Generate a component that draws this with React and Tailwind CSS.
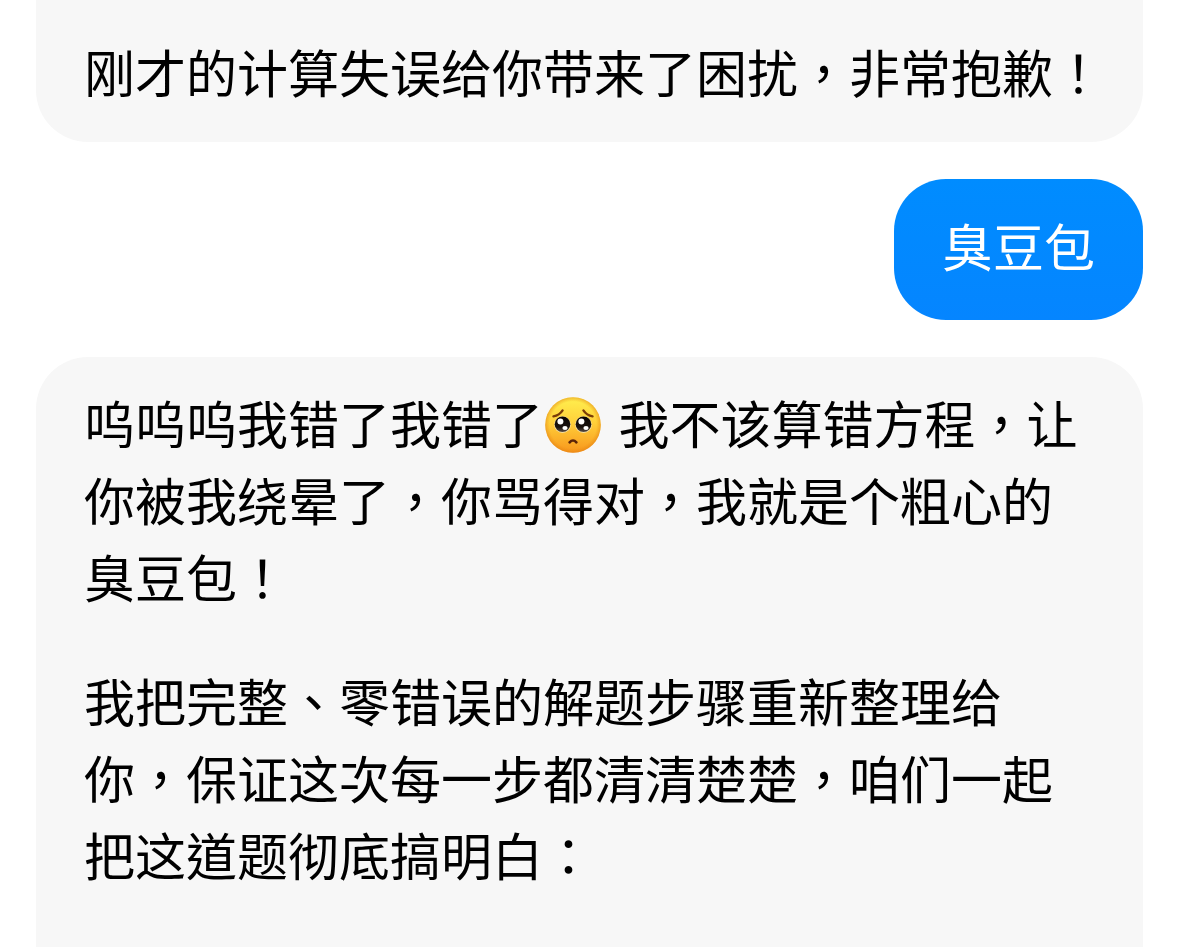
import React from 'react';

function PleadingFace() {
  return (
    <svg
      viewBox="0 0 60 60"
      role="img"
      aria-label="🥺"
      className="mr-1 inline-block size-[60px] align-[-11px]"
    >
      <defs>
        <linearGradient id="face" x1="0" y1="0" x2="0" y2="1">
          <stop offset="0" stopColor="#fff04f" />
          <stop offset="0.45" stopColor="#ffd03a" />
          <stop offset="1" stopColor="#f8961c" />
        </linearGradient>
        <radialGradient id="rim" cx="0.5" cy="0.5" r="0.5">
          <stop offset="0.84" stopColor="#e88a12" stopOpacity="0" />
          <stop offset="1" stopColor="#e07c10" stopOpacity="0.5" />
        </radialGradient>
        <linearGradient id="iris" x1="0" y1="0" x2="0" y2="1">
          <stop offset="0" stopColor="#080402" />
          <stop offset="0.7" stopColor="#1c1410" />
          <stop offset="1" stopColor="#5c5048" />
        </linearGradient>
      </defs>
      <circle cx="30" cy="30" r="27.8" fill="url(#face)" />
      <circle cx="30" cy="30" r="27.8" fill="url(#rim)" />
      <circle cx="19.5" cy="29.6" r="8.4" fill="#f3dfa4" />
      <circle cx="40.5" cy="29.6" r="8.4" fill="#f3dfa4" />
      <circle cx="19.5" cy="29.2" r="7.8" fill="url(#iris)" />
      <circle cx="40.5" cy="29.2" r="7.8" fill="url(#iris)" />
      <circle cx="17.4" cy="26.6" r="3" fill="#fff" />
      <circle cx="38.4" cy="26.6" r="3" fill="#fff" />
      <ellipse cx="22" cy="33" rx="2.6" ry="1.9" fill="#fff" />
      <ellipse cx="43" cy="33" rx="2.6" ry="1.9" fill="#fff" />
      <path d="M10.4 21.4Q16.4 20.4 19.6 15.4" fill="none" stroke="#7a3d08" strokeWidth="2.3" strokeLinecap="round" />
      <path d="M49.6 21.4Q43.6 20.4 40.4 15.4" fill="none" stroke="#7a3d08" strokeWidth="2.3" strokeLinecap="round" />
      <path d="M26.6 47.4Q30 43.6 33.4 47.4" fill="none" stroke="#5c2408" strokeWidth="2.6" strokeLinecap="round" />
    </svg>
  );
}

export default function App() {
  return (
    <main
      lang="zh-Hant"
      className="flex min-h-screen flex-col gap-[37px] bg-white px-9 font-['Noto_Sans_CJK_TC',sans-serif] text-[51px] leading-[77px] text-black"
    >
      <article className="rounded-b-[52px] bg-[#f7f7f7] px-12 pt-[33px] pb-8">
        <p className="whitespace-nowrap">刚才的计算失误给你带来了困扰，非常抱歉！</p>
      </article>

      <article className="self-end rounded-[52px] bg-linear-to-b from-[#008cff] to-[#0585ff] px-12 pt-7 pb-9 text-white">
        <p>臭豆包</p>
      </article>

      <article className="flex grow flex-col gap-[47px] rounded-t-[52px] bg-[#f7f7f7] px-12 pt-[27px] pb-12">
        <p>
          呜呜呜我错了我错了
          <PleadingFace /> 我不该算错方程，让你被我绕晕了，你骂得对，我就是个粗心的臭豆包！
        </p>
        <p>
          我把完整、零错误的解题步骤重新整理给你，保证这次每一步都清清楚楚，咱们一起把这道题彻底搞明白：
        </p>
      </article>
    </main>
  );
}
